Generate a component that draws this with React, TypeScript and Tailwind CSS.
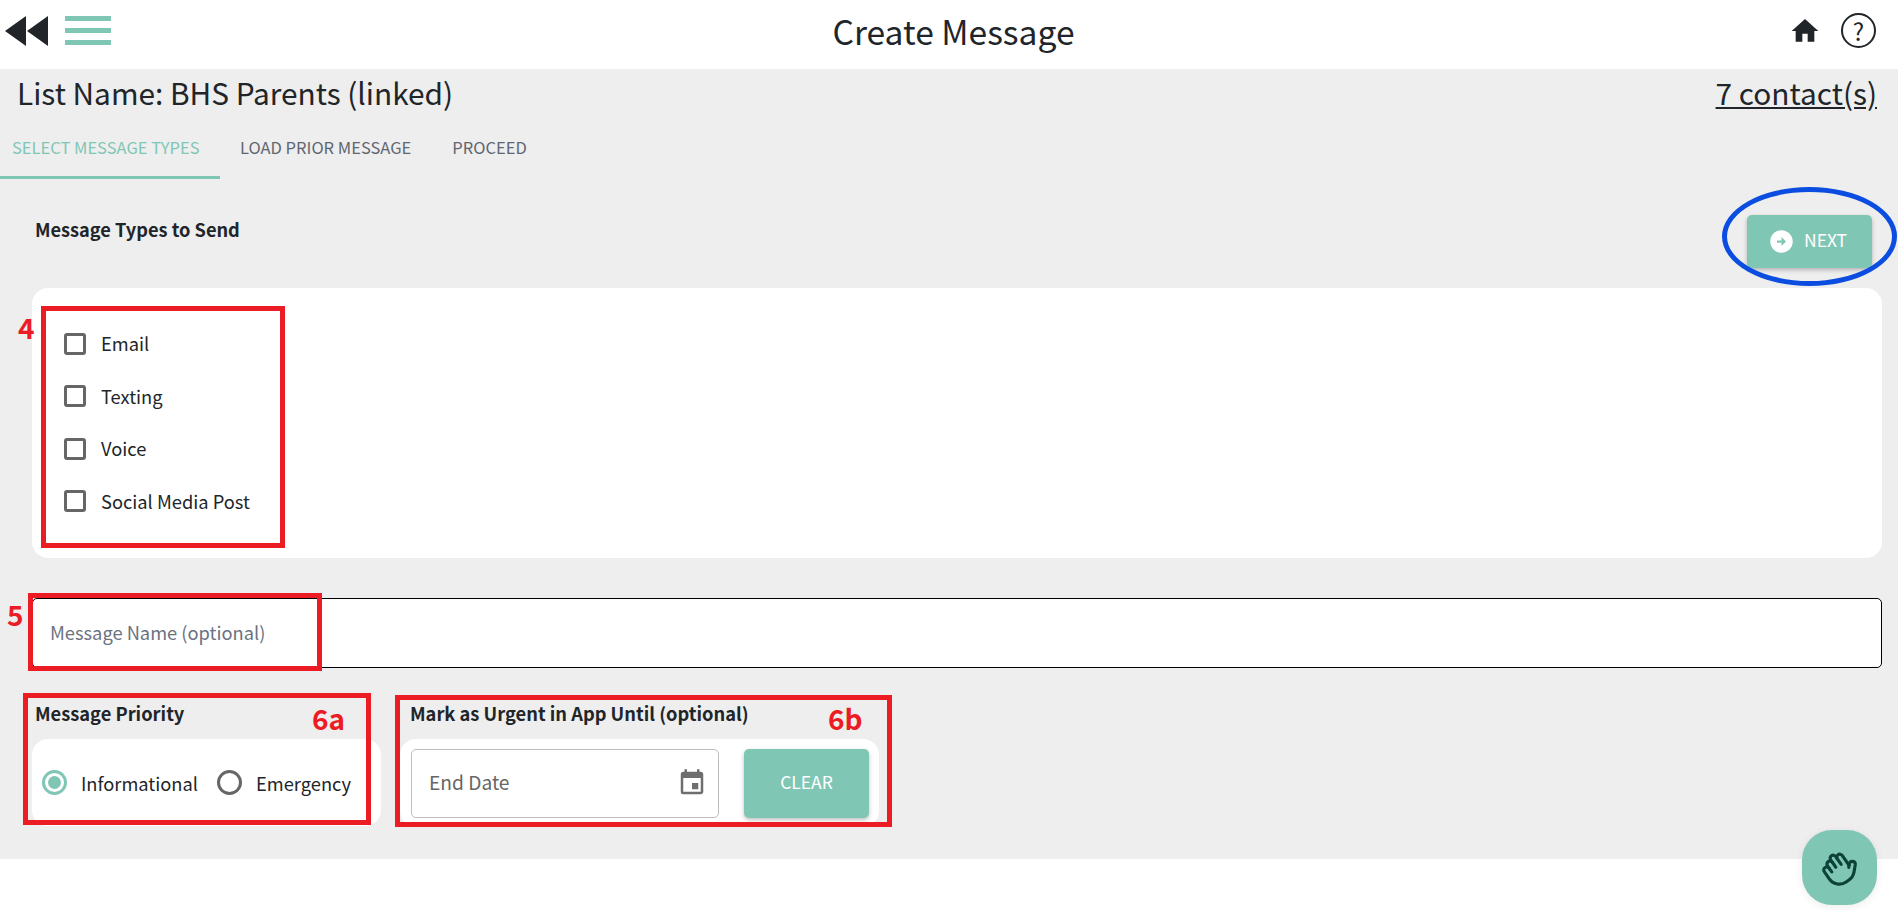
import { Hand } from "lucide-react";
import { MdArrowCircleRight, MdEvent, MdHome } from "react-icons/md";

const CHECKS = ["Email", "Texting", "Voice", "Social Media Post"];

function Header() {
    return (
        <header className="relative flex h-[69px] items-center justify-between bg-white pb-[8px] pl-[5px] pr-[22px]">
            <div className="flex items-center gap-[17px]">
                <svg width="43" height="30" viewBox="0 0 43 30" fill="#212529">
                    <path d="M0 15 L21 0 V30 Z" />
                    <path d="M22 15 L43 0 V30 Z" />
                </svg>
                <div className="flex w-[46px] flex-col gap-[7px]">
                    <div className="h-[5px] bg-[#80c6b5]" />
                    <div className="h-[5px] bg-[#80c6b5]" />
                    <div className="h-[5px] bg-[#80c6b5]" />
                </div>
            </div>
            <h1 className="ml-[7px] text-[33.6px] leading-[44px] text-[#212529]">Create Message</h1>
            <div className="flex items-center gap-[20px]">
                <MdHome size={32} className="text-[#212529]" />
                <div className="flex h-[35px] w-[35px] items-center justify-center rounded-full border-2 border-[#212529] text-[24px] leading-none text-[#212529]">
                    ?
                </div>
            </div>
        </header>
    );
}

function Tabs() {
    return (
        <div className="flex h-[58px] text-[16.5px] leading-[20px]">
            <div className="flex h-full w-[220px] items-center border-b-[3px] border-[#80c6b5] pb-[3px] pl-[12px] text-[#80c6b5]">
                SELECT MESSAGE TYPES
            </div>
            <div className="flex h-full items-center pb-[6px] pl-[20px] text-[#5f6670]">LOAD PRIOR MESSAGE</div>
            <div className="flex h-full items-center pb-[6px] pl-[41px] text-[#5f6670]">PROCEED</div>
        </div>
    );
}

function TypesCard() {
    return (
        <div className="ml-[32px] mr-[16px] flex h-[270px] flex-col gap-[24.6px] rounded-[16px] bg-white pl-[32px] pt-[41px]">
            {CHECKS.map((label) => (
                <label key={label} className="flex h-[28px] items-center gap-[15px] text-[18.3px] leading-[28px] text-[#212529]">
                    <span className="mt-[1px] h-[22px] w-[22px] rounded-[3px] border-[3px] border-[#666666]" />
                    {label}
                </label>
            ))}
        </div>
    );
}

function Radio({ label, checked }: { label: string; checked?: boolean }) {
    return (
        <label className="flex items-center gap-[14px] text-[18.3px] leading-[28px] text-[#212529]">
            {checked ? (
                <span className="flex h-[25px] w-[25px] items-center justify-center rounded-full border-[3px] border-[#80c6b5]">
                    <span className="h-[13px] w-[13px] rounded-full bg-[#80c6b5]" />
                </span>
            ) : (
                <span className="h-[25px] w-[25px] rounded-full border-[3px] border-[#666666]" />
            )}
            {label}
        </label>
    );
}

function BottomRow() {
    return (
        <div className="ml-[32px] mt-[25px] flex gap-[19px]">
            <div className="w-[349px]">
                <div className="h-[46px] pl-[3px] text-[18.3px] font-bold leading-[40px] text-[#212529]">Message Priority</div>
                <div className="flex h-[87px] items-center gap-[19px] rounded-[16px] bg-white pl-[10px]">
                    <Radio label="Informational" checked />
                    <Radio label="Emergency" />
                </div>
            </div>
            <div className="w-[479px]">
                <div className="h-[46px] pl-[10px] text-[18.3px] font-bold leading-[40px] text-[#212529]">
                    Mark as Urgent in App Until (optional)
                </div>
                <div className="flex h-[88px] gap-[25px] rounded-[16px] bg-white pl-[11px] pt-[10px]">
                    <div className="flex h-[69px] w-[308px] items-center justify-between rounded-[5px] border border-[#bdbdbd] pb-[2px] pl-[17px] pr-[11px]">
                        <input
                            placeholder="End Date"
                            className="min-w-0 flex-1 bg-transparent text-[19.2px] outline-none placeholder:text-[#666666]"
                        />
                        <MdEvent size={30} className="text-[#6e6e6e]" />
                    </div>
                    <button className="h-[69px] w-[125px] rounded-[5px] bg-[#80c6b5] pb-[2px] text-[17.5px] text-white shadow-[0_2px_4px_rgba(0,0,0,0.25)]">
                        CLEAR
                    </button>
                </div>
            </div>
        </div>
    );
}

// the red and blue marks drawn over the screenshot
function Annotations() {
    const label = "absolute text-[28px] font-bold leading-none text-[#ec1c24]";
    const box = "absolute border-[5px] border-[#ec1c24]";
    return (
        <>
            <div className={`${box} left-[41px] top-[306px] h-[242px] w-[244px]`} />
            <div className={`${box} left-[28px] top-[593px] h-[78px] w-[294px]`} />
            <div className={`${box} left-[23px] top-[693px] h-[132px] w-[348px]`} />
            <div className={`${box} left-[395px] top-[695px] h-[132px] w-[497px]`} />
            <div className="absolute left-[1722px] top-[187px] h-[99px] w-[175px] rounded-[50%] border-[5px] border-[#0b4de0]" />
            <span className={`${label} left-[18px] top-[313px]`}>4</span>
            <span className={`${label} left-[7px] top-[600px]`}>5</span>
            <span className={`${label} left-[312px] top-[704px]`}>6a</span>
            <span className={`${label} left-[828px] top-[704px]`}>6b</span>
        </>
    );
}

export default function App() {
    return (
        <div className="relative h-[910px] w-[1898px] overflow-hidden bg-white font-['Noto_Sans_CJK_JP',sans-serif]">
            <Header />
            <main className="h-[790px] bg-[#eeeeee]">
                <div className="flex h-[52px] items-center justify-between pb-[6px] pl-[17px] pr-[21px] text-[29.8px] leading-[44px] text-[#212529]">
                    <span>List Name: BHS Parents (linked)</span>
                    <span className="underline">7 contact(s)</span>
                </div>
                <Tabs />
                <div className="flex h-[109px] items-start justify-between pl-[35px] pr-[26px]">
                    <div className="mt-[36px] text-[18.2px] font-bold leading-[28px] text-[#212529]">Message Types to Send</div>
                    <button className="mt-[36px] flex h-[53px] w-[125px] items-center gap-[9px] rounded-[5px] bg-[#80c6b5] pb-[2px] pl-[21px] text-[17.5px] text-white shadow-[0_2px_4px_rgba(0,0,0,0.25)]">
                        <MdArrowCircleRight size={27} className="mt-[2px]" />
                        NEXT
                    </button>
                </div>
                <TypesCard />
                <input
                    placeholder="Message Name (optional)"
                    className="ml-[32px] mt-[40px] block h-[70px] w-[1850px] rounded-[5px] border border-black bg-white pb-[3px] pl-[17px] text-[18.3px] outline-none placeholder:text-[#6b7280]"
                />
                <BottomRow />
            </main>
            <Annotations />
            <button className="absolute left-[1802px] top-[830px] flex h-[75px] w-[75px] items-center justify-center rounded-[30px] bg-[#80c6b5] shadow-[0_2px_8px_rgba(0,0,0,0.08)]">
                <Hand size={36} strokeWidth={2.1} className="-rotate-[35deg] -scale-x-100 text-[#0d4238]" />
            </button>
        </div>
    );
}
